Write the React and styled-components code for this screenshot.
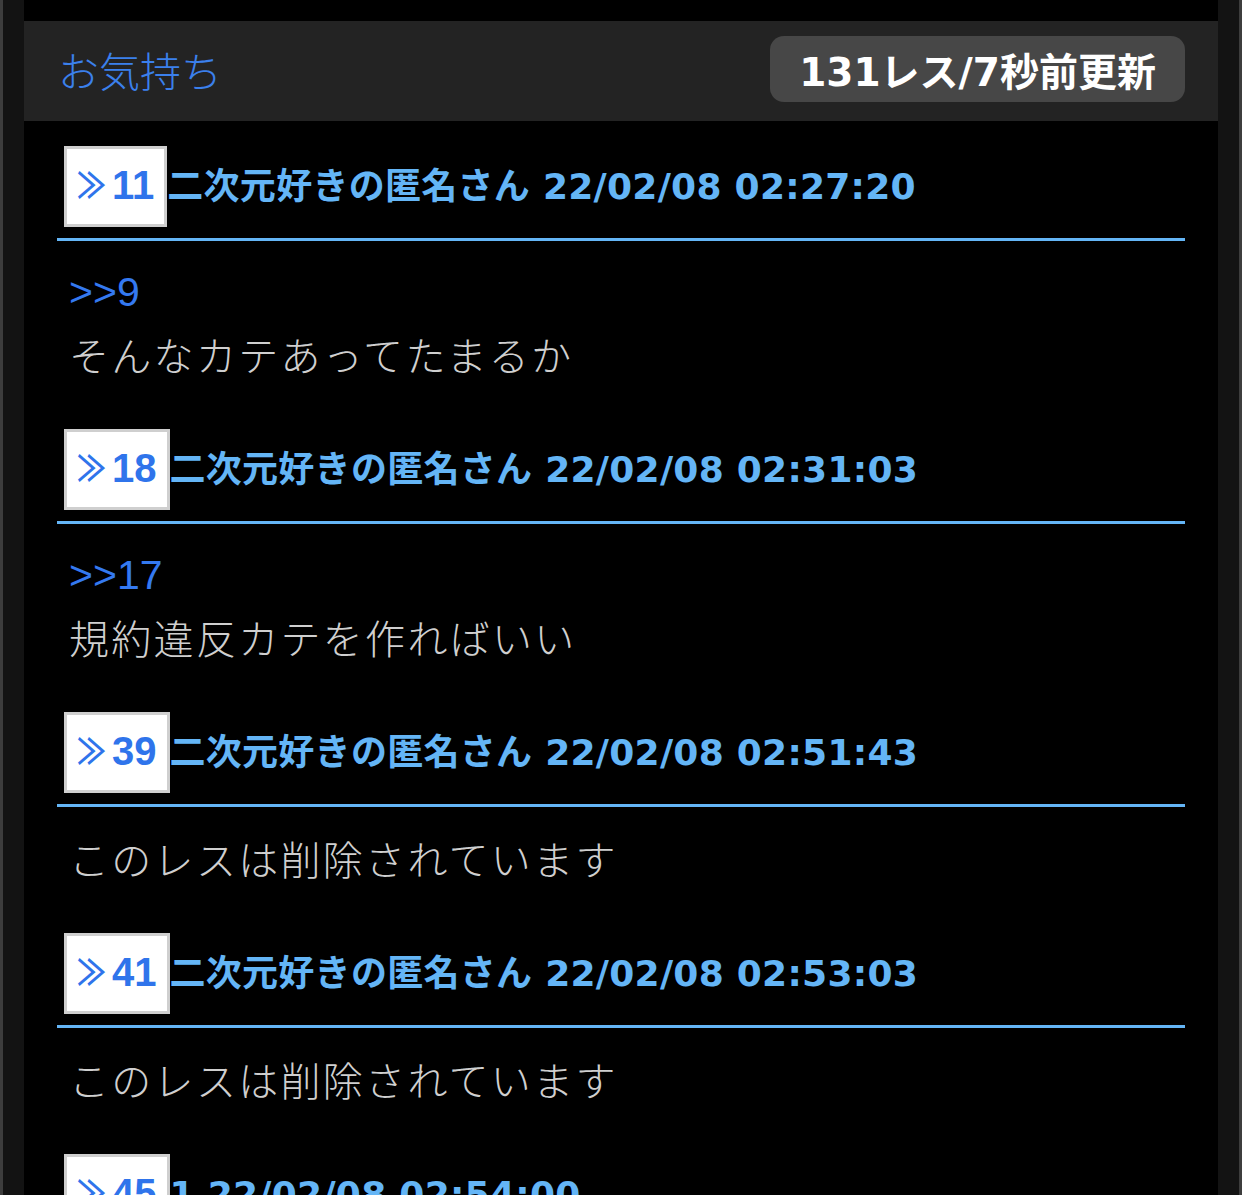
import styled, { createGlobalStyle } from "styled-components";

const GlobalStyle = createGlobalStyle`
  html, body {
    margin: 0;
    padding: 0;
    background: #3d3d3d;
  }
  body {
    font-family: "Noto Sans CJK JP", "Noto Sans", sans-serif;
  }
`;

const posts = [
  { no: 11, name: "二次元好きの匿名さん", date: "22/02/08 02:27:20", quote: ">>9", text: "そんなカテあってたまるか" },
  { no: 18, name: "二次元好きの匿名さん", date: "22/02/08 02:31:03", quote: ">>17", text: "規約違反カテを作ればいい" },
  { no: 39, name: "二次元好きの匿名さん", date: "22/02/08 02:51:43", text: "このレスは削除されています" },
  { no: 41, name: "二次元好きの匿名さん", date: "22/02/08 02:53:03", text: "このレスは削除されています" },
  { no: 45, name: "1", date: "22/02/08 02:54:00", text: "" },
];

const App = () => {
  return (
    <>
      <GlobalStyle />
      <Shell>
        <Main>
          <TopBar>
            <Title>お気持ち</Title>
            <Badge>131レス/7秒前更新</Badge>
          </TopBar>
          <PostList>
            {posts.map((p) => (
              <Post key={p.no}>
                <PostHead>
                  <NoBox>
                    <Arrow>≫</Arrow>
                    <span>{p.no}</span>
                  </NoBox>
                  <Meta>
                    {p.name} {p.date}
                  </Meta>
                </PostHead>
                <PostBody>
                  {p.quote && <Quote>{p.quote}</Quote>}
                  <Text>{p.text}</Text>
                </PostBody>
              </Post>
            ))}
          </PostList>
        </Main>
      </Shell>
    </>
  );
};

const Shell = styled.div`
  margin: 0 3px;
  padding: 0 21px;
  background: #131313;
  min-height: 100vh;
`;

const Main = styled.div`
  background: #000;
  padding-top: 21px;
  min-height: 100vh;
`;

const TopBar = styled.header`
  box-sizing: border-box;
  height: 100px;
  background: #232323;
  display: flex;
  align-items: center;
  justify-content: space-between;
  padding: 0 33px 4px 34px;
`;

const Title = styled.h1`
  margin: 0;
  font-size: 41px;
  font-weight: 300;
  color: #3b80ec;
  font-family: "Noto Sans CJK JP", sans-serif;
`;

const Badge = styled.div`
  height: 66px;
  display: flex;
  align-items: center;
  padding: 0 29px;
  background: #474747;
  border-radius: 14px;
  color: #fff;
  font-size: 39px;
  font-weight: 700;
  font-family: "DejaVu Sans", "Noto Sans CJK JP", sans-serif;
`;

const PostList = styled.div`
  padding: 25px 33px 0;
`;

const Post = styled.article`
  margin-bottom: 44px;
`;

const PostHead = styled.div`
  display: flex;
  align-items: baseline;
  padding: 0 0 11px 7px;
  border-bottom: 3px solid #64b5f6;
`;

const NoBox = styled.span`
  display: inline-flex;
  align-items: baseline;
  box-sizing: border-box;
  height: 81px;
  padding: 14px 10px 0 12px;
  line-height: 40px;
  background: #fff;
  border: 3px solid #cfcfcf;
  color: #2f74eb;
  font-size: 40px;
  font-weight: 700;
  font-family: "Liberation Sans", "DejaVu Sans", sans-serif;
`;

const Arrow = styled.span`
  display: inline-flex;
  justify-content: center;
  width: 25px;
  margin-right: 8px;
  transform: scaleX(0.8);
  font-size: 36px;
  font-weight: 700;
  font-family: "Noto Sans CJK JP", sans-serif;
`;

const Meta = styled.span`
  color: #64b5f6;
  font-size: 36px;
  font-weight: 700;
  letter-spacing: 0.28px;
  white-space: nowrap;
  font-family: "DejaVu Sans", "Noto Sans CJK JP", sans-serif;
`;

const PostBody = styled.div`
  padding: 20px 0 0 12px;
`;

const Quote = styled.div`
  line-height: 62px;
  font-size: 41px;
  color: #3479f0;
  font-family: "Liberation Sans", sans-serif;
`;

const Text = styled.div`
  line-height: 62px;
  min-height: 62px;
  font-size: 40px;
  font-weight: 300;
  letter-spacing: 2.3px;
  color: #cfcfcf;
  font-family: "Noto Sans CJK JP", sans-serif;
`;

export default App;
